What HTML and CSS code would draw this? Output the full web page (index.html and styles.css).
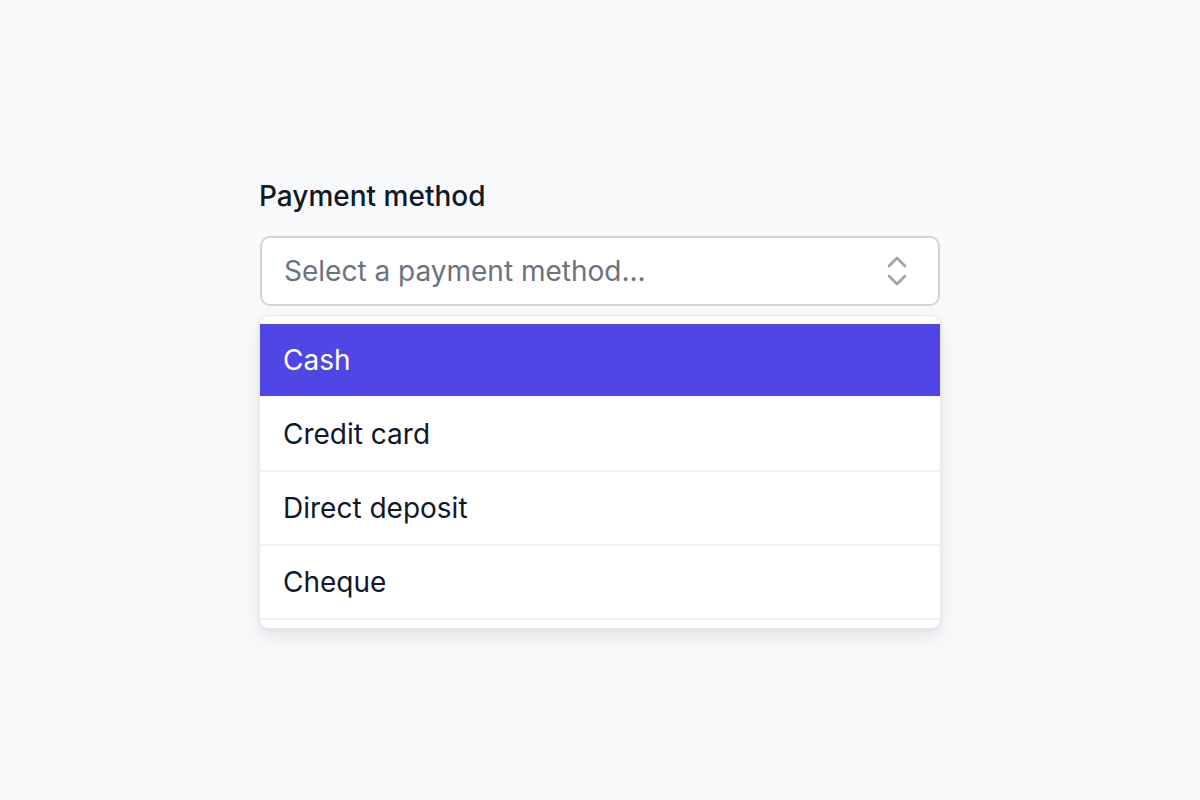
FILE: index.html
```html
<!DOCTYPE html>
<html>
<head>
<meta charset="utf-8">
<link rel="stylesheet" href="styles.css">
</head>
<body>
<div class="page">
  <div class="field">
    <div class="label">Payment method</div>
    <div class="select">
      <span class="placeholder">Select a payment method...</span>
      <svg class="chev" width="20" height="30" viewBox="0 0 20 30" fill="none" stroke="#9ca3af" stroke-width="2.6" stroke-linecap="round" stroke-linejoin="round">
        <path d="M2 10 L10 2 L18 10"/>
        <path d="M2 20 L10 28 L18 20"/>
      </svg>
    </div>
    <ul class="menu">
      <li class="opt active">Cash</li>
      <li class="opt">Credit card</li>
      <li class="opt">Direct deposit</li>
      <li class="opt">Cheque</li>
      <li class="tail"></li>
    </ul>
  </div>
</div>
</body>
</html>
```
FILE: styles.css
```css
html, body {
  margin: 0;
  padding: 0;
  background: #f8f9fb;
  font-family: Inter, "Noto Sans", sans-serif;
}
.page {
  display: flex;
  justify-content: center;
  padding-top: 178px;
  height: 800px;
  box-sizing: border-box;
}
.field {
  width: 682px;
}
.label {
  font-size: 28px;
  font-weight: 500;
  color: #111827;
  line-height: 36px;
  margin-bottom: 22px;
}
.select {
  height: 70px;
  box-sizing: border-box;
  margin: 0 1px;
  border: 2px solid #d1d5db;
  border-radius: 10px;
  background: #fff;
  display: flex;
  align-items: center;
  justify-content: space-between;
  padding: 0 31px 0 22px;
}
.placeholder {
  font-size: 28px;
  color: #6b7280;
}
.chev {
  display: block;
}
.menu {
  list-style: none;
  margin: 9px 0 0;
  padding: 8px 0 0;
  background: #fff;
  border: 1px solid #e5e7eb;
  border-radius: 10px;
  box-shadow: 0 10px 18px rgba(17, 24, 39, 0.07), 0 2px 6px rgba(17, 24, 39, 0.05);
  overflow: hidden;
}
.opt {
  height: 72px;
  display: flex;
  align-items: center;
  padding-left: 23px;
  font-size: 28px;
  color: #111827;
  border-bottom: 2px solid #f1f2f4;
}
.opt.active {
  background: #4f46e5;
  color: #fff;
  border-bottom-color: #fff;
}
.tail {
  height: 8px;
}
```
